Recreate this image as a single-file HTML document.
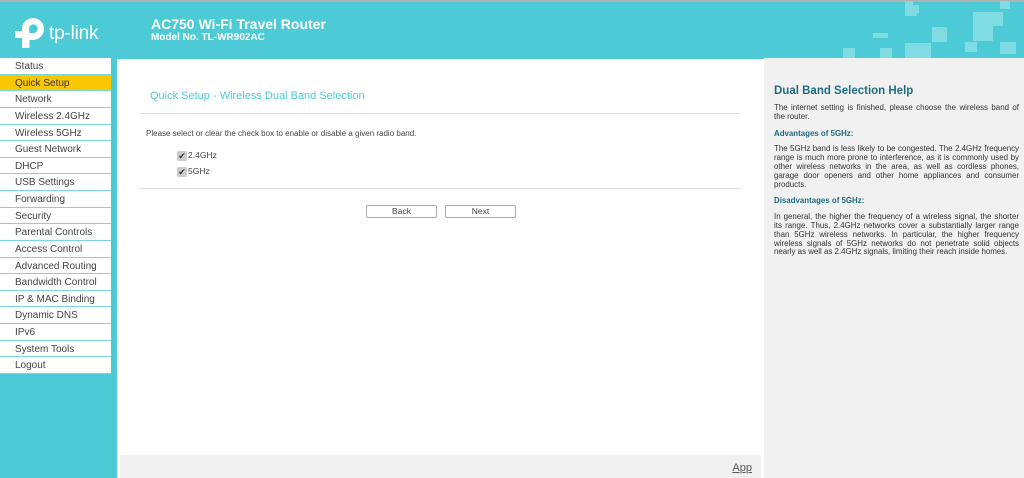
<!DOCTYPE html>
<html><head><meta charset="utf-8"><style>
*{margin:0;padding:0;box-sizing:border-box}
body{width:1024px;height:478px;overflow:hidden;background:#4ccbd6;font-family:"Liberation Sans",sans-serif;position:relative}
.topline{position:absolute;left:0;top:0;width:1024px;height:2px;background:#b0b0b0}
.hdr{position:absolute;left:0;top:2px;width:1024px;height:56px;background:#4ccbd6}
.t1{position:absolute;left:151px;top:16px;color:#fff;font-weight:bold;font-size:14px}
.t2{position:absolute;left:151px;top:32px;color:#fff;font-weight:bold;font-size:10px}
.logo-t{position:absolute;left:49px;top:23px;color:#fff;font-size:19px;letter-spacing:-0.2px}
.menu{position:absolute;left:0;top:58px;width:111px}
.menu div{height:16.63px;background:#fff;border-bottom:1.5px solid #7ad7df;font-size:10px;color:#444;padding-left:15px;line-height:17px}
.menu div.sel{background:#f9c600;color:#333}
.main{position:absolute;left:117px;top:59px;width:647px;height:419px;background:#fff}
.foot{position:absolute;left:120px;top:455px;width:641px;height:23px;background:#f0f0f0}
.foot a{position:absolute;right:9px;top:7px;font-size:11px;color:#555;text-decoration:underline}
.help{position:absolute;left:764px;top:58px;width:260px;height:420px;background:#f1f1f1}
.help h2{position:absolute;left:10px;top:27px;font-size:11.5px;color:#1f6e80;font-weight:bold}
.help .c{position:absolute;left:10px;top:46px;width:245px;font-size:7.9px;color:#333;text-align:justify;line-height:8.8px}
.help h3{font-size:7.9px;color:#1f6e80;font-weight:bold;margin:8px 0 7px}
.title{position:absolute;left:150px;top:90px;font-size:11px;color:#4ccbd6}
.l1{position:absolute;left:140px;top:113px;width:600px;height:1px;background:#e0e0e0}
.desc{position:absolute;left:146px;top:129px;font-size:8px;color:#444}
.cb{position:absolute;left:177px;font-size:8.5px;color:#444}
.cb span{display:inline-block;width:10px;height:10px;background:#ccc;border-radius:2px;vertical-align:middle;margin-right:1px;position:relative;font-size:9px;line-height:10px;text-align:center;color:#333}
.l2{position:absolute;left:140px;top:188px;width:600px;height:1px;background:#e0e0e0}
.btn{position:absolute;top:205px;width:71px;height:13px;border:1px solid #aaa;border-radius:2px;background:#fff;font-size:8.5px;color:#444;text-align:center;line-height:11px}
</style></head><body>
<div class="topline"></div>
<div class="hdr"></div>
<svg style="position:absolute;left:0;top:0" width="1024" height="58">
<g fill="#fff">
<path d="M22 48 V38 H15 V31 H22 V29 A11 11 0 1 1 33 40 H29.5 V48 Z M29.5 33 H33 A4.3 4.3 0 1 0 29 28.7 Z" fill-rule="evenodd"/>
</g>
<g fill="#7fdce3">
<rect x="905" y="1" width="8" height="12"/><rect x="905" y="5" width="14" height="8"/>
<rect x="905" y="12" width="12" height="4"/>
<rect x="973" y="12" width="30" height="14"/><rect x="973" y="26" width="20" height="15"/>
<rect x="905" y="43" width="26" height="15"/><rect x="880" y="48" width="12" height="10"/>
<rect x="932" y="27" width="15" height="15"/><rect x="965" y="42" width="12" height="10"/>
<rect x="1000" y="42" width="16" height="12"/><rect x="1000" y="1" width="10" height="8"/>
<rect x="843" y="48" width="12" height="10"/><rect x="873" y="33" width="15" height="5"/>
</g>
</svg>
<div class="logo-t">tp-link</div>
<div class="t1">AC750 Wi-Fi Travel Router</div>
<div class="t2">Model No. TL-WR902AC</div>
<div class="menu">
<div>Status</div><div class="sel">Quick Setup</div><div>Network</div><div>Wireless 2.4GHz</div><div>Wireless 5GHz</div><div>Guest Network</div><div>DHCP</div><div>USB Settings</div><div>Forwarding</div><div>Security</div><div>Parental Controls</div><div>Access Control</div><div>Advanced Routing</div><div>Bandwidth Control</div><div>IP &amp; MAC Binding</div><div>Dynamic DNS</div><div>IPv6</div><div>System Tools</div><div>Logout</div>
</div>
<div class="main"></div>
<div class="title">Quick Setup - Wireless Dual Band Selection</div>
<div class="l1"></div>
<div class="desc">Please select or clear the check box to enable or disable a given radio band.</div>
<div class="cb" style="top:150px"><span>✔</span>2.4GHz</div>
<div class="cb" style="top:166px"><span>✔</span>5GHz</div>
<div class="l2"></div>
<div class="btn" style="left:366px">Back</div>
<div class="btn" style="left:445px">Next</div>
<div class="foot"><a>App</a></div>
<div class="help">
<h2>Dual Band Selection Help</h2>
<div class="c">
<p>The internet setting is finished, please choose the wireless band of the router.</p>
<h3>Advantages of 5GHz:</h3>
<p>The 5GHz band is less likely to be congested. The 2.4GHz frequency range is much more prone to interference, as it is commonly used by other wireless networks in the area, as well as cordless phones, garage door openers and other home appliances and consumer products.</p>
<h3>Disadvantages of 5GHz:</h3>
<p>In general, the higher the frequency of a wireless signal, the shorter its range. Thus, 2.4GHz networks cover a substantially larger range than 5GHz wireless networks. In particular, the higher frequency wireless signals of 5GHz networks do not penetrate solid objects nearly as well as 2.4GHz signals, limiting their reach inside homes.</p>
</div>
</div>
</body></html>
